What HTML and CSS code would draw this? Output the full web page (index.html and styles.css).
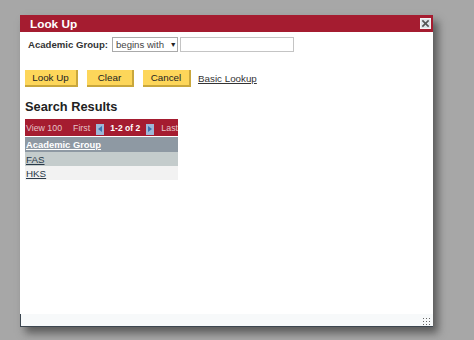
FILE: index.html
```html
<!DOCTYPE html>
<html>
<head>
  <title>Look Up</title>
  <link rel="stylesheet" href="styles.css">
</head>
<body>
  <div class="dialog">
    <div class="titlebar">
      <span class="title">Look Up</span>
      <span class="close">
        <svg width="9" height="9" viewBox="0 0 10 10"><path d="M1.5 1.5 L8.5 8.5 M8.5 1.5 L1.5 8.5" stroke="#555" stroke-width="1.8"/></svg>
      </span>
    </div>
    <div class="body">
      <div class="criteria">
        <label class="crit-label">Academic Group:</label>
        <span class="select">begins with <span class="arrow">&#9660;</span></span>
        <span class="textbox"></span>
      </div>
      <div class="buttons">
        <button class="btn b1">Look Up</button>
        <button class="btn b2">Clear</button>
        <button class="btn b3">Cancel</button>
        <a class="link" href="#">Basic Lookup</a>
      </div>
      <h2 class="results-title">Search Results</h2>
      <div class="grid">
        <div class="nav">
          <span class="view">View 100</span>
          <span class="first">First</span>
          <span class="navbtn"><span class="tri left"></span></span>
          <b>1-2 of 2</b>
          <span class="navbtn"><span class="tri right"></span></span>
          <span class="last">Last</span>
        </div>
        <div class="row head"><a href="#">Academic Group</a></div>
        <div class="row odd"><a href="#">FAS</a></div>
        <div class="row even"><a href="#">HKS</a></div>
      </div>
    </div>
    <div class="footer"><span class="grip"></span></div>
  </div>
</body>
</html>
```

FILE: styles.css
```css
body {
  margin: 0;
  background: #a7a7a7;
  font-family: "Liberation Sans", Arial, sans-serif;
  height: 340px;
  overflow: hidden;
}

.dialog {
  margin: 15px 0 0 20px;
  width: 413px;
  height: 312px;
  background: #fff;
  display: flex;
  flex-direction: column;
  box-shadow: 5px 6px 8px rgba(40, 40, 40, 0.6);
}

.titlebar {
  height: 17px;
  background: #a51c30;
  display: flex;
  align-items: center;
  justify-content: space-between;
  padding: 0 2px 0 10px;
}

.title {
  color: #fff;
  font-weight: bold;
  font-size: 11.8px;
}

.close {
  width: 11px;
  height: 11px;
  background: #dfe4ea;
  border: 1px solid #f4f4f4;
  box-sizing: border-box;
  display: flex;
  align-items: center;
  justify-content: center;
}

.body {
  flex: 1;
  padding: 5px 0 0 5px;
}

.criteria {
  display: flex;
  align-items: center;
  height: 15px;
  padding-left: 3px;
  font-size: 9.6px;
  color: #333;
}

.crit-label {
  font-weight: bold;
  margin-right: 4px;
  white-space: nowrap;
}

.select {
  width: 61px;
  height: 13px;
  border: 1px solid #aaa;
  padding-left: 3px;
  line-height: 13px;
  white-space: nowrap;
  margin-right: 2px;
  color: #444;
}

.arrow {
  font-size: 7px;
  margin-left: 3px;
  vertical-align: 1px;
  color: #222;
}

.textbox {
  width: 112px;
  height: 13px;
  border: 1px solid #c4c4c4;
}

.buttons {
  display: flex;
  align-items: center;
  margin-top: 18px;
  height: 17px;
}

.btn {
  height: 17px;
  background: #fdd65a;
  border: 0;
  border-right: 2px solid #c9a73c;
  border-bottom: 2px solid #c9a73c;
  font-family: "Liberation Sans", Arial, sans-serif;
  font-size: 9.8px;
  color: #222;
  padding: 0;
  margin-right: 9px;
}

.b1 { width: 53px; }
.b2 { width: 47px; }
.b3 { width: 48px; margin-right: 7px; }

.link {
  color: #333;
  font-size: 9.8px;
}

.results-title {
  font-size: 12.8px;
  margin: 12px 0 5px 0;
  color: #222;
}

.grid {
  width: 153px;
  font-size: 8.8px;
}

.nav {
  height: 17px;
  background: #a51c30;
  color: #e6c3c8;
  display: flex;
  align-items: center;
  padding-left: 1px;
  white-space: nowrap;
  overflow: hidden;
}

.nav b {
  color: #fff;
  font-size: 8.5px;
  margin: 0 6px;
}

.first {
  margin: 0 6px 0 11px;
}

.last {
  margin-left: 7px;
}

.navbtn {
  width: 11px;
  height: 11px;
  background: #9cb8d8;
  display: flex;
  align-items: center;
  justify-content: center;
  margin-top: 3px;
}

.tri {
  width: 0;
  height: 0;
  border-top: 3px solid transparent;
  border-bottom: 3px solid transparent;
}

.tri.left {
  border-right: 4px solid #3b72b0;
}

.tri.right {
  border-left: 4px solid #3b72b0;
}

.row {
  height: 14px;
  line-height: 15px;
  padding-left: 1px;
  font-size: 9.8px;
}

.row a {
  color: #2a3a4a;
}

.head {
  height: 15px;
  line-height: 16px;
  background: #8e99a3;
  margin-top: 1px;
  font-size: 9.4px;
}

.head a {
  color: #fff;
  font-weight: bold;
}

.odd {
  background: #c4cccc;
}

.even {
  background: #f2f2f2;
}

.footer {
  height: 12px;
  background: #f7f9fa;
  border-bottom: 1px solid #3c4650;
  box-shadow: inset 1px 0 0 #3c4650;
  display: flex;
  justify-content: flex-end;
  align-items: flex-end;
}

.grip {
  width: 8px;
  height: 8px;
  margin: 0 3px 1px 0;
  background-image: radial-gradient(#666 0.8px, transparent 1px);
  background-size: 3px 3px;
}
```
